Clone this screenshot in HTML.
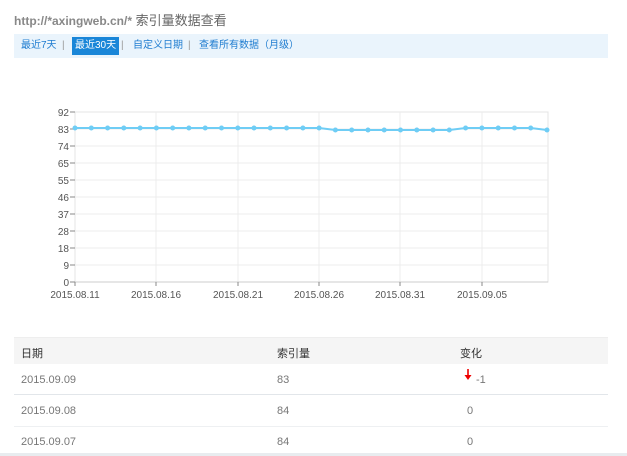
<!DOCTYPE html>
<html><head><meta charset="utf-8"><style>
body{margin:0;background:#fff;font-family:"Liberation Sans","Noto Sans CJK SC",sans-serif;width:627px;height:456px;overflow:hidden;position:relative}
.t{position:absolute;left:14px;top:10px;font-size:13px;color:#666}
.t b{color:#888;font-weight:bold;font-size:12px}
.nav{position:absolute;left:14px;top:34px;width:594px;height:24px;background:#eaf4fc;font-size:10px;color:#1e7cd0}
.nav span{position:absolute;top:0;line-height:24px;white-space:nowrap}
.nav .sep{color:#999}
.nav .on{background:#1a86d8;color:#fff;padding:0 3px;top:3px;line-height:18px}
.tb{position:absolute;left:14px;width:594px;font-size:11px;color:#777}
.tb div{position:absolute;top:0}
</style></head><body>
<div class="t"><b>http://*axingweb.cn/*</b> 索引量数据查看</div>
<div class="nav">
<span style="left:7px">最近7天</span><span class="sep" style="left:48px">|</span>
<span class="on" style="left:58px">最近30天</span><span class="sep" style="left:107px">|</span>
<span style="left:119px">自定义日期</span><span class="sep" style="left:174px">|</span>
<span style="left:185px">查看所有数据（月级）</span>
</div>
<svg style="position:absolute;left:0;top:0" width="627" height="320" font-family="Liberation Sans,sans-serif" font-size="10" fill="#555">
<rect x="75" y="112" width="473" height="170" fill="#fff" stroke="#e4e4e4"/>
<g stroke="#ececec">
<line x1="75" x2="548" y1="129" y2="129"/><line x1="75" x2="548" y1="146" y2="146"/><line x1="75" x2="548" y1="163" y2="163"/><line x1="75" x2="548" y1="180" y2="180"/><line x1="75" x2="548" y1="197" y2="197"/><line x1="75" x2="548" y1="214" y2="214"/><line x1="75" x2="548" y1="231" y2="231"/><line x1="75" x2="548" y1="248" y2="248"/><line x1="75" x2="548" y1="265" y2="265"/>
<line x1="156" x2="156" y1="112" y2="282"/><line x1="238" x2="238" y1="112" y2="282"/><line x1="319" x2="319" y1="112" y2="282"/><line x1="400" x2="400" y1="112" y2="282"/><line x1="482" x2="482" y1="112" y2="282"/>
</g>
<line x1="75" x2="548" y1="282" y2="282" stroke="#ccc"/>
<g stroke="#888"><line x1="75" x2="75" y1="282" y2="286"/><line x1="156" x2="156" y1="282" y2="286"/><line x1="238" x2="238" y1="282" y2="286"/><line x1="319" x2="319" y1="282" y2="286"/><line x1="400" x2="400" y1="282" y2="286"/><line x1="482" x2="482" y1="282" y2="286"/>
<line x1="70" x2="75" y1="112" y2="112"/><line x1="70" x2="75" y1="129" y2="129"/><line x1="70" x2="75" y1="146" y2="146"/><line x1="70" x2="75" y1="163" y2="163"/><line x1="70" x2="75" y1="180" y2="180"/><line x1="70" x2="75" y1="197" y2="197"/><line x1="70" x2="75" y1="214" y2="214"/><line x1="70" x2="75" y1="231" y2="231"/><line x1="70" x2="75" y1="248" y2="248"/><line x1="70" x2="75" y1="265" y2="265"/><line x1="70" x2="75" y1="282" y2="282"/></g>
<g text-anchor="end"><text x="69" y="116">92</text><text x="69" y="133">83</text><text x="69" y="150">74</text><text x="69" y="167">65</text><text x="69" y="184">55</text><text x="69" y="201">46</text><text x="69" y="218">37</text><text x="69" y="235">28</text><text x="69" y="252">18</text><text x="69" y="269">9</text><text x="69" y="286">0</text></g>
<g text-anchor="middle"><text x="75" y="298">2015.08.11</text><text x="156" y="298">2015.08.16</text><text x="238" y="298">2015.08.21</text><text x="319" y="298">2015.08.26</text><text x="400" y="298">2015.08.31</text><text x="482" y="298">2015.09.05</text></g>
<polyline fill="none" stroke="#6fcdf5" stroke-width="2" points="75,128 91.3,128 107.6,128 123.8,128 140.1,128 156.4,128 172.7,128 188.9,128 205.2,128 221.5,128 237.8,128 254,128 270.3,128 286.6,128 302.9,128 319.1,128 335.4,130 351.7,130 368,130 384.2,130 400.5,130 416.8,130 433.1,130 449.3,130 465.6,128 481.9,128 498.2,128 514.5,128 530.7,128 547,130"/>
<g fill="#6fcdf5"><circle cx="75" cy="128" r="2.5"/><circle cx="91.3" cy="128" r="2.5"/><circle cx="107.6" cy="128" r="2.5"/><circle cx="123.8" cy="128" r="2.5"/><circle cx="140.1" cy="128" r="2.5"/><circle cx="156.4" cy="128" r="2.5"/><circle cx="172.7" cy="128" r="2.5"/><circle cx="188.9" cy="128" r="2.5"/><circle cx="205.2" cy="128" r="2.5"/><circle cx="221.5" cy="128" r="2.5"/><circle cx="237.8" cy="128" r="2.5"/><circle cx="254" cy="128" r="2.5"/><circle cx="270.3" cy="128" r="2.5"/><circle cx="286.6" cy="128" r="2.5"/><circle cx="302.9" cy="128" r="2.5"/><circle cx="319.1" cy="128" r="2.5"/><circle cx="335.4" cy="130" r="2.5"/><circle cx="351.7" cy="130" r="2.5"/><circle cx="368" cy="130" r="2.5"/><circle cx="384.2" cy="130" r="2.5"/><circle cx="400.5" cy="130" r="2.5"/><circle cx="416.8" cy="130" r="2.5"/><circle cx="433.1" cy="130" r="2.5"/><circle cx="449.3" cy="130" r="2.5"/><circle cx="465.6" cy="128" r="2.5"/><circle cx="481.9" cy="128" r="2.5"/><circle cx="498.2" cy="128" r="2.5"/><circle cx="514.5" cy="128" r="2.5"/><circle cx="530.7" cy="128" r="2.5"/><circle cx="547" cy="130" r="2.5"/></g>
</svg>
<div style="position:absolute;left:14px;top:337px;width:594px;height:26px;background:#f5f5f5;border-top:1px solid #eee"></div>
<div class="tb" style="top:345px;color:#333"><div style="left:7px">日期</div><div style="left:263px">索引量</div><div style="left:446px">变化</div></div>
<div class="tb" style="top:374px"><div style="left:7px">2015.09.09</div><div style="left:263px">83</div><div style="left:462px">-1</div></div>
<svg style="position:absolute;left:464px;top:369px" width="8" height="12"><line x1="4" y1="0" x2="4" y2="8" stroke="#e00" stroke-width="1.6"/><path d="M0.5 6 L4 11 L7.5 6Z" fill="#e00"/></svg>
<div style="position:absolute;left:14px;top:394px;width:594px;border-top:1px solid #e2e6ea"></div>
<div class="tb" style="top:405px"><div style="left:7px">2015.09.08</div><div style="left:263px">84</div><div style="left:453px">0</div></div>
<div style="position:absolute;left:14px;top:426px;width:594px;border-top:1px solid #eef0f2"></div>
<div class="tb" style="top:436px"><div style="left:7px">2015.09.07</div><div style="left:263px">84</div><div style="left:453px">0</div></div>
<div style="position:absolute;left:0;top:453px;width:627px;height:3px;background:#e8ecef"></div>
</body></html>
